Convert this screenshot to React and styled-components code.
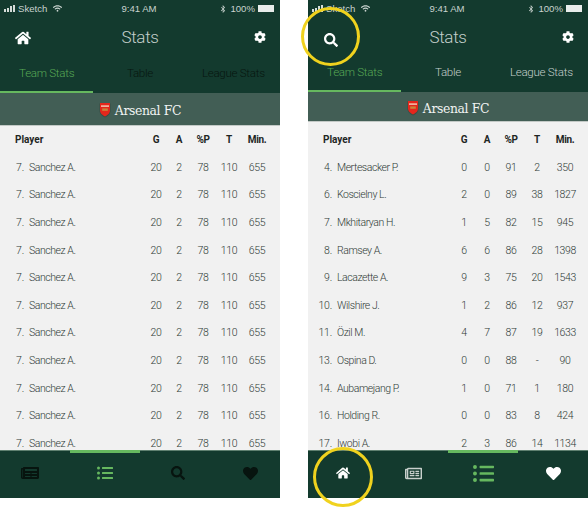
import React from "react";
import styled, { createGlobalStyle } from "styled-components";
import { FaHome, FaCog, FaSearch, FaNewspaper, FaRegNewspaper, FaListUl, FaHeart, FaBluetoothB, FaWifi } from "react-icons/fa";

const Global = createGlobalStyle`
  html, body { margin: 0; padding: 0; background: #fff; }
  * { box-sizing: border-box; }
`;
const Page = styled.div`
  display: flex; gap: 28px; width: 588px; height: 507px; background: #fff;
  font-family: Lato, "Open Sans", sans-serif;
`;
const Phone = styled.section`
  position: relative; width: 280px; height: 498px; display: flex; flex-direction: column;
  background: #f1f1f1;
`;
const Status = styled.div`
  height: 16px; padding: 1px 6px 0 4px; background: #133a2e; color: #c9d3cf;
  display: grid; grid-template-columns: 1fr auto 1fr; align-items: center; font: 400 9.6px/15px "Liberation Sans", sans-serif;
`;
const StatusSide = styled.div`
  display: flex; align-items: center; gap: 3px; justify-content: ${p => p.$end ? "flex-end" : "flex-start"};
`;
const Signal = styled.span`
  display: inline-flex; align-items: flex-end; gap: 1px; height: 7px;
  i { display: block; width: 2px; background: #d5dcd9; }
  i:nth-child(1) { height: 3px; } i:nth-child(2) { height: 4px; } i:nth-child(3) { height: 6px; } i:nth-child(4) { height: 7px; }
`;
const Battery = styled.span`
  display: inline-block; width: 16px; height: 7px; background: #e8ecea; border: 1px solid #e8ecea;
`;
const Header = styled.header`
  height: 43px; background: #133a2e; display: grid; grid-template-columns: 46px 1fr 46px; align-items: center; color: #fff;
  padding-bottom: 2px;
`;
const IconCell = styled.div`
  display: flex; justify-content: center; align-items: center; font-size: ${p => p.$size || 15}px;
  transform: translate(${p => p.$dx || 0}px, ${p => p.$dy || 0}px);
`;
const Title = styled.h1`
  margin: 0; text-align: center; color: #c3cfcb; font: 300 17px Roboto, sans-serif; letter-spacing: -.3px;
`;
const Tabs = styled.nav`
  height: ${p => p.$h}px; background: #133a2e; display: grid; grid-template-columns: repeat(3, 1fr);
`;
const Tab = styled.div`
  display: flex; align-items: center; justify-content: center; padding-bottom: 5px; font: 300 11.6px Roboto, sans-serif;
  letter-spacing: -.3px; white-space: nowrap;
  color: ${p => p.$active ? "#58a955" : p.$muted ? "#07160f" : "#c3cfcb"};
  border-bottom: 2.5px solid ${p => p.$active ? "#66b85f" : "transparent"};
`;
const Banner = styled.div`
  height: ${p => p.$h}px; padding-top: ${p => p.$nudge}px; background: #425e55; border-bottom: 1px solid #c3c9c6;
  display: flex; align-items: center; justify-content: center; gap: 4px;
  color: #f1f3f2; font: 400 12.4px "DejaVu Serif", serif; letter-spacing: -.35px;
`;
const Table = styled.div`
  flex: 1; min-height: 0; overflow: hidden; padding-top: ${p => p.$top}px;
`;
const Row = styled.div`
  display: grid; grid-template-columns: 16px 119px 26px 20px 28px 24px 32px; align-items: center; height: 27.6px;
  padding-left: 8px; font: 300 10.5px Roboto, sans-serif; color: #2f3a36; letter-spacing: -.2px; white-space: nowrap;
`;
const Head = styled(Row)`
  padding-left: 15px; color: #1e2624; font-weight: 700; font-size: 10px; letter-spacing: 0; grid-template-columns: 128px 26px 20px 28px 24px 32px;
`;
const Rank = styled.span` text-align: right; `;
const Name = styled.span` padding-left: 5px; letter-spacing: -.45px; `;
const Num = styled.span` text-align: center; letter-spacing: -.4px; `;
const Dock = styled.footer`
  position: relative; flex: none; height: 48px; background: #133a2e; border-top: 1px solid #5f8070;
  display: grid; grid-template-columns: repeat(4, 1fr); align-items: center;
`;
const Marker = styled.span`
  position: absolute; top: -1px; left: ${p => p.$left}px; width: 70px; height: 3px; background: #66b85f;
`;
const DockIcon = styled.div`
  display: flex; justify-content: center; padding-bottom: 3px; font-size: ${p => p.$size || 15}px; color: ${p => p.$color};
  transform: translateX(${p => p.$dx || 0}px);
`;
const Ring = styled.span`
  position: absolute; left: ${p => p.$x}px; top: ${p => p.$y}px; width: ${p => p.$d}px; height: ${p => p.$d}px;
  border: 3px solid #f0d21e; border-radius: 50%; pointer-events: none;
`;

const Crest = () => (
  <svg width="12" height="16" viewBox="0 0 12 16">
    <path d="M0.5 1.5H11.5V9C11.5 12 8.5 14.3 6 15.5C3.5 14.3 0.5 12 0.5 9Z" fill="#2c3b35" opacity=".5" />
    <path d="M1 1H11V8.5C11 11.5 8.2 13.3 6 14.5C3.8 13.3 1 11.5 1 8.5Z" fill="#e4261c" />
    <rect x="2" y="3.4" width="8" height="1.4" fill="#f3d2bc" />
    <rect x="3.2" y="6.4" width="5.6" height="2.4" fill="#c9853a" />
  </svg>
);

const same = Array.from({ length: 11 }, () => ["7.", "Sanchez A.", "20", "2", "78", "110", "655"]);
const real = [
  ["4.", "Mertesacker P.", "0", "0", "91", "2", "350"],
  ["6.", "Koscielny L.", "2", "0", "89", "38", "1827"],
  ["7.", "Mkhitaryan H.", "1", "5", "82", "15", "945"],
  ["8.", "Ramsey A.", "6", "6", "86", "28", "1398"],
  ["9.", "Lacazette A.", "9", "3", "75", "20", "1543"],
  ["10.", "Wilshire J.", "1", "2", "86", "12", "937"],
  ["11.", "Özil M.", "4", "7", "87", "19", "1633"],
  ["13.", "Ospina D.", "0", "0", "88", "-", "90"],
  ["14.", "Aubamejang P.", "1", "0", "71", "1", "180"],
  ["16.", "Holding R.", "0", "0", "83", "8", "424"],
  ["17.", "Iwobi A.", "2", "3", "86", "14", "1134"],
];

function Screen({ variant, rows }) {
  const right = variant === "right";
  return (
    <Phone>
      <Status>
        <StatusSide><Signal><i /><i /><i /><i /></Signal>Sketch<FaWifi size={9} style={{ marginLeft: 3 }} /></StatusSide>
        <span>9:41 AM</span>
        <StatusSide $end><FaBluetoothB size={8} />100%<Battery /></StatusSide>
      </Status>
      <Header>
        <IconCell $size={right ? 14 : 16} $dy={right ? 3 : 1}>{right ? <FaSearch /> : <FaHome />}</IconCell>
        <Title>Stats</Title>
        <IconCell $size={12} $dx={3}><FaCog /></IconCell>
      </Header>
      <Tabs $h={right ? 33 : 34}>
        <Tab $active>Team Stats</Tab>
        <Tab $muted={!right}>Table</Tab>
        <Tab $muted={!right}>League Stats</Tab>
      </Tabs>
      <Banner $h={right ? 30 : 33} $nudge={right ? 3 : 2}><Crest />Arsenal FC</Banner>
      <Table $top={right ? 4 : 0}>
        <Head>
          <span>Player</span><Num>G</Num><Num>A</Num><Num>%P</Num><Num>T</Num><Num>Min.</Num>
        </Head>
        {rows.map((r, i) => (
          <Row key={i}>
            <Rank>{r[0]}</Rank><Name>{r[1]}</Name>
            <Num>{r[2]}</Num><Num>{r[3]}</Num><Num>{r[4]}</Num><Num>{r[5]}</Num><Num>{r[6]}</Num>
          </Row>
        ))}
      </Table>
      <Dock>
        {right ? (
          <>
            <Marker $left={140} />
            <DockIcon $color="#fff" $size={14}><FaHome /></DockIcon>
            <DockIcon $color="#c8d0cc" $size={17}><FaRegNewspaper /></DockIcon>
            <DockIcon $color="#66b85f" $size={21}><FaListUl /></DockIcon>
            <DockIcon $color="#fff" $size={15}><FaHeart /></DockIcon>
          </>
        ) : (
          <>
            <Marker $left={70} />
            <DockIcon $color="#07140f" $size={18} $dx={-5}><FaNewspaper /></DockIcon>
            <DockIcon $color="#66b85f" $size={16}><FaListUl /></DockIcon>
            <DockIcon $color="#07140f" $size={14} $dx={3}><FaSearch /></DockIcon>
            <DockIcon $color="#07140f" $size={15} $dx={5}><FaHeart /></DockIcon>
          </>
        )}
      </Dock>
      {right && <Ring $x={-7} $y={7} $d={59} />}
      {right && <Ring $x={5} $y={447} $d={60} />}
    </Phone>
  );
}

export default function App() {
  return (
    <Page>
      <Global />
      <Screen rows={same} />
      <Screen variant="right" rows={real} />
    </Page>
  );
}
